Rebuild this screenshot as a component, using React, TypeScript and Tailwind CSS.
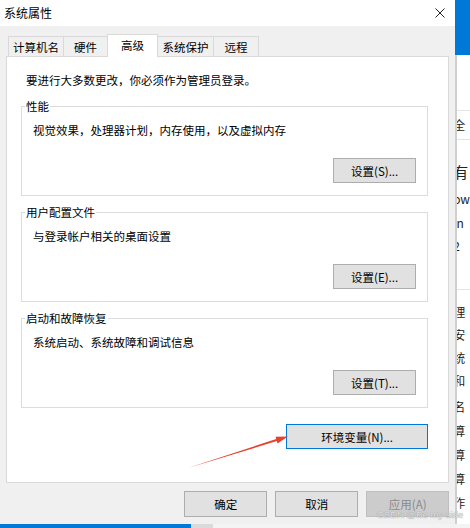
const font = "font-['Microsoft_YaHei_UI','Noto_Sans_CJK_SC',sans-serif]";

const tabs = [
  { label: '计算机名', w: 'w-[56px]' },
  { label: '硬件', w: 'w-[45px]' },
  { label: '高级', w: 'w-[51px]', active: true },
  { label: '系统保护', w: 'w-[57px]' },
  { label: '远程', w: 'w-[46px]' },
];

function WinButton({ children, className = '' }: { children: React.ReactNode; className?: string }) {
  return (
    <div
      className={`h-[25px] flex items-center justify-center bg-[#e1e1e1] border border-[#adadad] text-[11.5px] leading-[16px] text-black ${className}`}
    >
      {children}
    </div>
  );
}

function Group({ title, desc, button }: { title: string; desc: string; button: string }) {
  return (
    <div className="relative h-[90px] border border-[#dcdcdc] flex flex-col">
      <span className="absolute top-[-9px] left-[3px] px-[1px] bg-white text-[11.5px] leading-[16px] text-black">
        {title}
      </span>
      <div className="pt-[15px] pl-[11px] text-[11.5px] leading-[16px] text-black">{desc}</div>
      <WinButton className="self-end mr-[11px] mt-[20px] w-[83px]">{button}</WinButton>
    </div>
  );
}

// right edge of the window behind the dialog, mostly cut off
const behind: { t: string; h: string; extra?: string }[] = [
  { t: '', h: 'h-[55px]' },
  { t: '全', h: 'h-[30px]', extra: 'border-y border-[#e3e3e3]' },
  { t: '', h: 'h-[15px]' },
  { t: '有', h: 'h-[32px]', extra: 'text-[#1a5fb4] !text-[15px]' },
  { t: 'ow', h: 'h-[24px]' },
  { t: 'in', h: 'h-[24px]' },
  { t: '2', h: 'h-[22px]' },
  { t: '', h: 'h-[33px]', extra: 'border-b border-[#e3e3e3]' },
  { t: '', h: 'h-[10px]' },
  { t: '理', h: 'h-[23px]' },
  { t: '安', h: 'h-[23px]' },
  { t: '统', h: 'h-[23px]' },
  { t: '和', h: 'h-[23px]' },
  { t: '', h: 'h-[3px]' },
  { t: '名', h: 'h-[24px]' },
  { t: '算', h: 'h-[24px]' },
  { t: '算', h: 'h-[24px]' },
  { t: '算', h: 'h-[24px]' },
  { t: '作', h: 'h-[24px]' },
];

export default function App() {
  return (
    <div className={`relative w-[470px] h-[528px] overflow-hidden bg-white flex flex-col ${font}`}>
      <div className="flex h-[524px]">
        {/* dialog */}
        <div className="w-[456px] h-full bg-[#f0f0f0] flex flex-col">
          <div className="h-[26px] bg-white flex items-center justify-between pl-[4px] pr-[10px]">
            <span className="text-[12px] leading-[16px] text-black">系统属性</span>
            <svg width="10" height="10" viewBox="0 0 10 10" className="text-[#222]">
              <path d="M0.5 0.5 L9.5 9.5 M9.5 0.5 L0.5 9.5" stroke="currentColor" strokeWidth="1" />
            </svg>
          </div>

          <div className="flex flex-col px-[6px] pt-[8px]">
            <div className="flex items-end h-[22px] pl-[2px]">
              {tabs.map((tab) =>
                tab.active ? (
                  <div
                    key={tab.label}
                    className={`${tab.w} h-[23px] -mb-px -ml-px relative z-10 bg-white border border-b-0 border-[#d9d9d9] flex items-start justify-center pt-[2px] text-[11.5px] leading-[16px] text-black`}
                  >
                    {tab.label}
                  </div>
                ) : (
                  <div
                    key={tab.label}
                    className={`${tab.w} h-[20px] -ml-px first:ml-0 bg-[#f0f0f0] border border-b-0 border-[#d9d9d9] flex items-center justify-center text-[11.5px] leading-[16px] text-black`}
                  >
                    {tab.label}
                  </div>
                )
              )}
            </div>

            <div className="h-[427px] bg-white border border-[#d9d9d9] flex flex-col pl-[14px] pr-[20px] pt-[15px]">
              <div className="ml-[5px] text-[11.5px] leading-[16px] text-black">
                要进行大多数更改，你必须作为管理员登录。
              </div>
              <div className="mt-[18px]">
                <Group title="性能" desc="视觉效果，处理器计划，内存使用，以及虚拟内存" button="设置(S)..." />
              </div>
              <div className="mt-[16px]">
                <Group title="用户配置文件" desc="与登录帐户相关的桌面设置" button="设置(E)..." />
              </div>
              <div className="mt-[16px]">
                <Group title="启动和故障恢复" desc="系统启动、系统故障和调试信息" button="设置(T)..." />
              </div>
              <WinButton className="self-end mt-[16px] w-[142px] !border-[#0078d7]">环境变量(N)...</WinButton>
            </div>

            <div className="flex justify-end gap-[8px] mt-[8px]">
              <WinButton className="w-[83px] h-[26px]">确定</WinButton>
              <WinButton className="w-[83px] h-[26px]">取消</WinButton>
              <div className="w-[83px] h-[26px] flex items-center justify-center bg-[#cccccc] border border-[#bfbfbf] text-[11.5px] leading-[16px] text-[#8a8a8a]">
                应用(A)
              </div>
            </div>
          </div>
        </div>

        {/* window behind */}
        <div className="flex-1 flex flex-col">
          <div className="h-[55px] bg-[#0078d7] shrink-0" />
          <div className="flex-1 border-l-2 border-[#cfcfcf] overflow-hidden">
            {behind.map((row, i) => (
              <div
                key={i}
                className={`${row.h} ${row.extra ?? ''} flex items-center whitespace-nowrap -ml-[4px] text-[12px] leading-none text-[#222]`}
              >
                {row.t}
              </div>
            ))}
          </div>
        </div>
      </div>

      {/* strip of another window at the very bottom */}
      <div className="h-[4px] flex">
        <div className="w-[191px] bg-[#0078d7]" />
        <div className="w-[22px] bg-[#dadada]" />
        <div className="flex-1 bg-[#f3f3f3]" />
      </div>

      {/* annotation arrow */}
      <svg className="absolute inset-0 pointer-events-none" width="470" height="528" viewBox="0 0 470 528">
        <polygon
          points="188,468 276.8,441.1 277.5,443.4 288,436.5 275.5,436.8 276.2,439.1"
          fill="#e8412f"
        />
      </svg>

      {/* watermark */}
      <span className="absolute left-[377px] top-[509px] text-[9.5px] leading-[12px] text-[#e2e2e2] [text-shadow:0_0_1px_#7a7a7a] font-['Liberation_Sans',sans-serif] whitespace-nowrap">
        CSDN @Be my side
      </span>
    </div>
  );
}
